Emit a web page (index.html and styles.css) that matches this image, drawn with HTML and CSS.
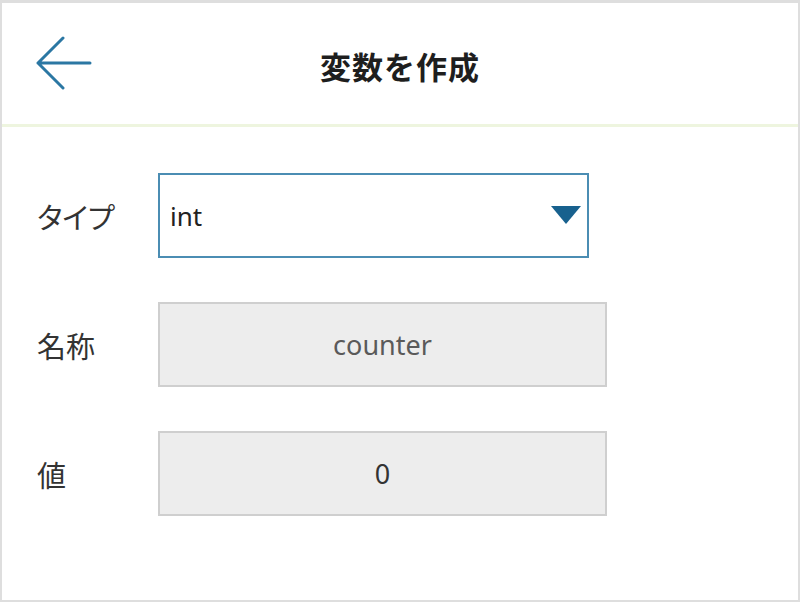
FILE: index.html
```html
<!DOCTYPE html>
<html lang="ja">
<head>
    <meta charset="UTF-8">
    <meta name="viewport" content="width=device-width, initial-scale=1.0">
    <title>変数を作成</title>
    <link rel="stylesheet" href="styles.css">
</head>
<body>
    <div class="frame">
        <header class="top-bar">
            <div class="back">
                <svg width="56" height="56" viewBox="0 0 56 56">
                    <path d="M27 2 L2 27 L27 52 M2 27 H54" fill="none" stroke="#2b77a3" stroke-width="3" stroke-linecap="round" stroke-linejoin="round"/>
                </svg>
            </div>
            <h1>変数を作成</h1>
            <div></div>
        </header>
        <form class="var-form">
            <div class="row">
                <label>タイプ</label>
                <div class="select">
                    <span>int</span>
                    <span class="caret"></span>
                </div>
            </div>
            <div class="row">
                <label>名称</label>
                <div class="field placeholder">counter</div>
            </div>
            <div class="row">
                <label>値</label>
                <div class="field">0</div>
            </div>
        </form>
    </div>
</body>
</html>
```

FILE: styles.css
```css
html, body {
    margin: 0;
    padding: 0;
    height: 100%;
}
body {
    font-family: "Noto Sans", "Noto Sans CJK JP", sans-serif;
    background: #ffffff;
    color: #333333;
}
.frame {
    box-sizing: border-box;
    height: 602px;
    border: 2px solid #dedede;
    border-top-width: 3px;
}
.top-bar {
    display: grid;
    grid-template-columns: 1fr auto 1fr;
    align-items: center;
    height: 121px;
    border-bottom: 3px solid #eef5df;
}
.back {
    padding-left: 34px;
    display: flex;
    align-items: center;
    margin-top: 0;
}
.top-bar h1 {
    margin: 4px 0 0 0;
    font-family: "Noto Sans CJK JP", sans-serif;
    font-size: 31px;
    font-weight: 700;
    color: #1e1e1e;
    letter-spacing: 1px;
}
.var-form {
    display: flex;
    flex-direction: column;
    gap: 44px;
    padding: 46px 0 0 35px;
}
.row {
    display: flex;
    align-items: center;
}
.row label {
    width: 121px;
    font-family: "Noto Sans CJK JP", sans-serif;
    font-size: 29px;
    font-feature-settings: "palt";
    color: #333333;
}
.select {
    box-sizing: border-box;
    width: 431px;
    height: 85px;
    border: 2px solid #4b8db3;
    display: flex;
    align-items: center;
    justify-content: space-between;
    padding: 0 6px 0 10px;
    font-size: 26px;
    color: #222222;
}
.caret {
    width: 0;
    height: 0;
    border-left: 15px solid transparent;
    border-right: 15px solid transparent;
    border-top: 18px solid #18618e;
    margin-top: -2px;
}
.field {
    box-sizing: border-box;
    width: 449px;
    height: 85px;
    border: 2px solid #cfcfcf;
    background: #ededed;
    display: flex;
    align-items: center;
    justify-content: center;
    font-size: 27px;
    color: #333333;
}
.field.placeholder {
    color: #5a5a5a;
}
```
